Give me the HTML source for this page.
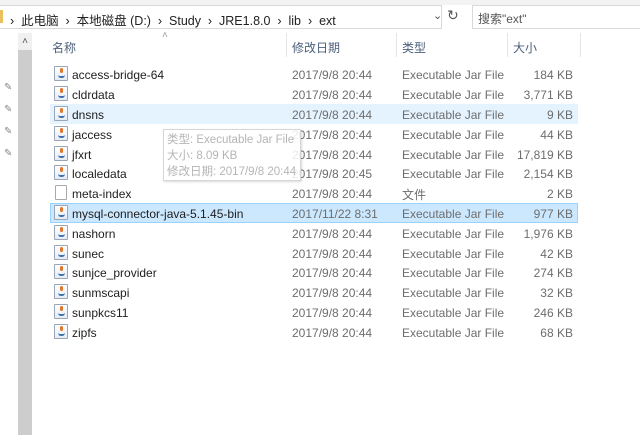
<!DOCTYPE html>
<html><head><meta charset="utf-8"><style>
*{margin:0;padding:0;box-sizing:border-box}
body{width:640px;height:435px;background:#fff;position:relative;overflow:hidden;font-family:"Liberation Sans","Noto Sans CJK SC",sans-serif;font-size:12px;color:#1e1e1e}
.a{position:absolute;white-space:nowrap}
.row{position:absolute;left:50px;width:528px;height:20px}
.row .ic{position:absolute;left:4px;top:2px;width:14px;height:15px;border:1px solid #9aa6b8;background:linear-gradient(#fff,#e6ecf4);border-radius:1px}
.row .ic i{position:absolute;left:3px;top:3px;width:7px;height:8px;border-bottom:2px solid #3c6fb0;border-radius:0 0 3px 3px}
.row .ic b{position:absolute;left:5px;top:1px;width:3px;height:5px;background:#e2762a;border-radius:2px}
.row .ic.doc{background:#fff;border-color:#a8a8a8;width:12px;left:5px}
.n{position:absolute;left:22px;top:4px}
.d{position:absolute;left:242px;top:4px;color:#6d6d6d}
.t{position:absolute;left:352px;top:4px;color:#6d6d6d}
.s{position:absolute;right:5px;top:4px;color:#6d6d6d}
.hdr{color:#4c607a;top:39px}
</style></head><body>
<div class="a" style="left:0;top:0;width:640px;height:5px;background:#f3f3f3"></div>
<div class="a" style="left:0;top:5px;width:442px;height:24px;border:1px solid #d9d9d9;border-left:none"></div>
<div class="a" style="left:0;top:10px;width:3px;height:13px;background:#e8c060"></div>
<div class="a" style="left:10px;top:10px;font-size:12.5px;color:#222">›&nbsp; 此电脑 &nbsp;›&nbsp; 本地磁盘 (D:) &nbsp;›&nbsp; Study &nbsp;›&nbsp; JRE1.8.0 &nbsp;›&nbsp; lib &nbsp;›&nbsp; ext</div>
<div class="a" style="left:433px;top:9px;color:#555;font-size:11px">⌄</div>
<div class="a" style="left:447px;top:7px;font-size:14px;color:#555">↻</div>
<div class="a" style="left:472px;top:5px;width:168px;height:24px;border:1px solid #d9d9d9;border-right:none"></div>
<div class="a" style="left:478px;top:10px;color:#555;font-size:12px">搜索"ext"</div>
<div class="a" style="left:18px;top:33px;width:14px;height:402px;background:#cdcdcd"></div>
<div class="a" style="left:18px;top:33px;width:14px;height:17px;background:#f0f0f0;text-align:center;font-size:10px;color:#555;line-height:17px">˄</div>
<div class="a" style="left:4px;top:77px;color:#888;font-size:10px;line-height:22px">✎<br>✎<br>✎<br>✎</div>
<div class="a" style="left:162px;top:30px;color:#999;font-size:10px">˄</div>
<div class="a hdr" style="left:52px">名称</div>
<div class="a" style="left:286px;top:33px;width:1px;height:24px;background:#e5e5e5"></div>
<div class="a hdr" style="left:292px">修改日期</div>
<div class="a" style="left:396px;top:33px;width:1px;height:24px;background:#e5e5e5"></div>
<div class="a hdr" style="left:402px">类型</div>
<div class="a" style="left:507px;top:33px;width:1px;height:24px;background:#e5e5e5"></div>
<div class="a hdr" style="left:513px">大小</div>
<div class="a" style="left:580px;top:33px;width:1px;height:24px;background:#e5e5e5"></div>

<div class="row" style="top:64px"><div class="ic"><b></b><i></i></div><span class="n">access-bridge-64</span><span class="d">2017/9/8 20:44</span><span class="t">Executable Jar File</span><span class="s">184 KB</span></div>
<div class="row" style="top:84px"><div class="ic"><b></b><i></i></div><span class="n">cldrdata</span><span class="d">2017/9/8 20:44</span><span class="t">Executable Jar File</span><span class="s">3,771 KB</span></div>
<div class="row" style="top:104px;background:#e5f3ff"><div class="ic"><b></b><i></i></div><span class="n">dnsns</span><span class="d">2017/9/8 20:44</span><span class="t">Executable Jar File</span><span class="s">9 KB</span></div>
<div class="row" style="top:124px"><div class="ic"><b></b><i></i></div><span class="n">jaccess</span><span class="d">2017/9/8 20:44</span><span class="t">Executable Jar File</span><span class="s">44 KB</span></div>
<div class="row" style="top:144px"><div class="ic"><b></b><i></i></div><span class="n">jfxrt</span><span class="d">2017/9/8 20:44</span><span class="t">Executable Jar File</span><span class="s">17,819 KB</span></div>
<div class="row" style="top:163px"><div class="ic"><b></b><i></i></div><span class="n">localedata</span><span class="d">2017/9/8 20:45</span><span class="t">Executable Jar File</span><span class="s">2,154 KB</span></div>
<div class="row" style="top:183px"><div class="ic doc"></div><span class="n">meta-index</span><span class="d">2017/9/8 20:44</span><span class="t" style="top:3px">文件</span><span class="s">2 KB</span></div>
<div class="row" style="top:203px;background:#cce8ff;border:1px solid #99d1ff"><div class="ic" style="left:3px;top:1px"><b></b><i></i></div><span class="n" style="left:21px;top:3px">mysql-connector-java-5.1.45-bin</span><span class="d" style="left:241px;top:3px">2017/11/22 8:31</span><span class="t" style="left:351px;top:3px">Executable Jar File</span><span class="s" style="right:4px;top:3px">977 KB</span></div>
<div class="row" style="top:223px"><div class="ic"><b></b><i></i></div><span class="n">nashorn</span><span class="d">2017/9/8 20:44</span><span class="t">Executable Jar File</span><span class="s">1,976 KB</span></div>
<div class="row" style="top:243px"><div class="ic"><b></b><i></i></div><span class="n">sunec</span><span class="d">2017/9/8 20:44</span><span class="t">Executable Jar File</span><span class="s">42 KB</span></div>
<div class="row" style="top:262px"><div class="ic"><b></b><i></i></div><span class="n">sunjce_provider</span><span class="d">2017/9/8 20:44</span><span class="t">Executable Jar File</span><span class="s">274 KB</span></div>
<div class="row" style="top:282px"><div class="ic"><b></b><i></i></div><span class="n">sunmscapi</span><span class="d">2017/9/8 20:44</span><span class="t">Executable Jar File</span><span class="s">32 KB</span></div>
<div class="row" style="top:302px"><div class="ic"><b></b><i></i></div><span class="n">sunpkcs11</span><span class="d">2017/9/8 20:44</span><span class="t">Executable Jar File</span><span class="s">246 KB</span></div>
<div class="row" style="top:322px"><div class="ic"><b></b><i></i></div><span class="n">zipfs</span><span class="d">2017/9/8 20:44</span><span class="t">Executable Jar File</span><span class="s">68 KB</span></div>

<div class="a" style="left:163px;top:129px;width:138px;height:52px;background:rgba(255,255,255,0.85);border:1px solid #d6d6d6;box-shadow:1px 1px 2px rgba(0,0,0,0.15);color:#b5b5b5;font-size:11.5px;line-height:16px;padding:2px 0 0 3px">类型: Executable Jar File<br>大小: 8.09 KB<br>修改日期: 2017/9/8 20:44</div>
</body></html>
